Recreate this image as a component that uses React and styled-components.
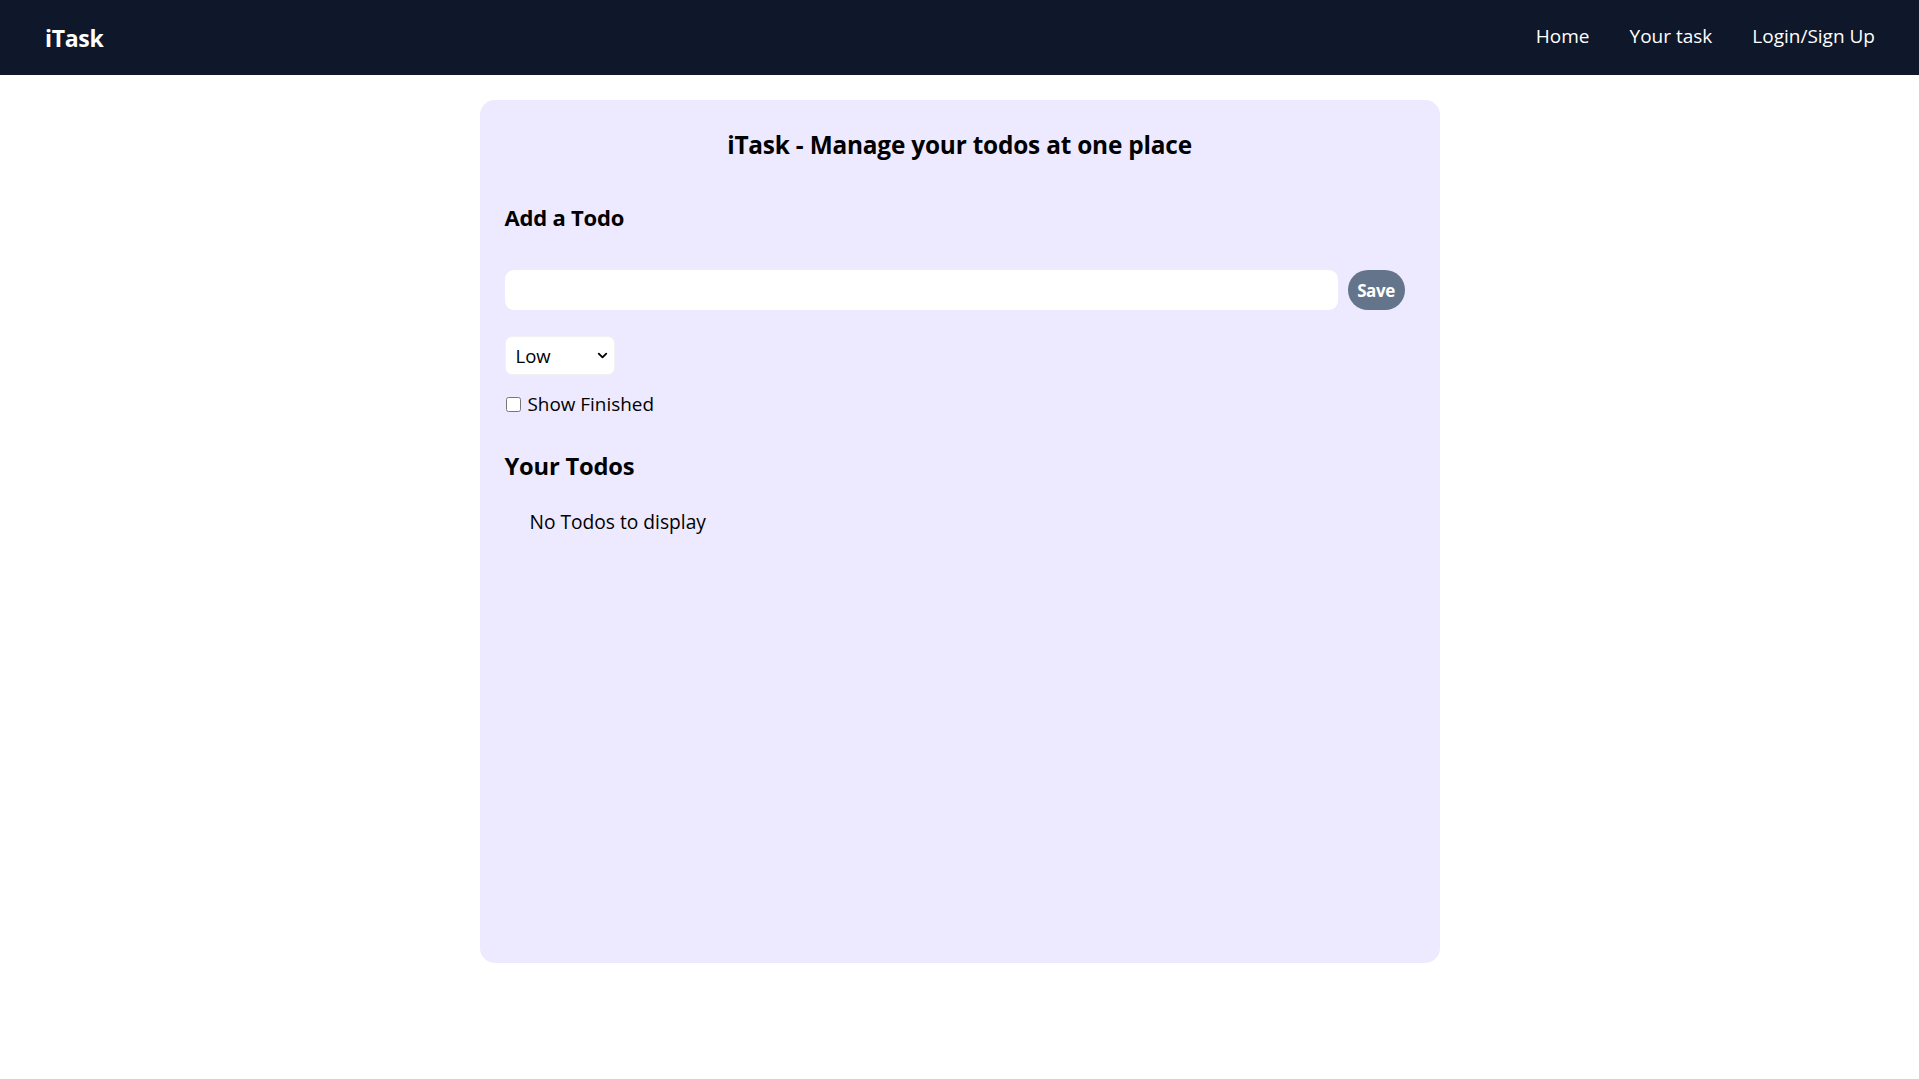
import React, { useState } from 'react';
import styled, { createGlobalStyle } from 'styled-components';
import { ChevronDown } from 'lucide-react';

const GlobalStyle = createGlobalStyle`
  * { box-sizing: border-box; }
  body {
    margin: 0;
    font-family: "Open Sans", "Noto Sans", sans-serif;
    color: #000;
    background: #fff;
  }
`;

const App = () => {
  const [todo, setTodo] = useState('');
  const [priority, setPriority] = useState('Low');
  const [showFinished, setShowFinished] = useState(false);

  return (
    <>
      <GlobalStyle />
      <Nav>
        <Logo>iTask</Logo>
        <NavLinks>
          <NavLink>Home</NavLink>
          <NavLink>Your task</NavLink>
          <NavLink>Login/Sign Up</NavLink>
        </NavLinks>
      </Nav>
      <Card>
        <Title>iTask - Manage your todos at one place</Title>
        <SubHeading>Add a Todo</SubHeading>
        <InputRow>
          <TodoInput value={todo} onChange={(e) => setTodo(e.target.value)} />
          <SaveButton disabled={todo.length < 1}>Save</SaveButton>
        </InputRow>
        <SelectWrap>
          <Select value={priority} onChange={(e) => setPriority(e.target.value)}>
            <option>Low</option>
            <option>Medium</option>
            <option>High</option>
          </Select>
          <Chevron>
            <ChevronDown size={15} strokeWidth={3} />
          </Chevron>
        </SelectWrap>
        <CheckRow>
          <Check
            type="checkbox"
            checked={showFinished}
            onChange={() => setShowFinished(!showFinished)}
          />
          Show Finished
        </CheckRow>
        <TodosHeading>Your Todos</TodosHeading>
        <Empty>No Todos to display</Empty>
      </Card>
    </>
  );
};

export default App;

const Nav = styled.nav`
  height: 75px;
  background: #0f172a;
  color: #fff;
  display: flex;
  align-items: center;
  justify-content: space-between;
  padding: 0 44px 3px 45px;
`;

const Logo = styled.span`
  font-size: 23px;
  font-weight: 700;
  letter-spacing: -0.3px;
  margin-top: 3px;
`;

const NavLinks = styled.ul`
  display: flex;
  gap: 40px;
  list-style: none;
  margin: 0;
  padding: 0;
`;

const NavLink = styled.li`
  font-size: 19px;
  cursor: pointer;
  &:hover {
    font-weight: 700;
  }
`;

const Card = styled.main`
  width: 960px;
  min-height: 863px;
  margin: 25px auto;
  padding: 25px;
  background: #ede9fe;
  border-radius: 15px;
  display: flex;
  flex-direction: column;
`;

const Title = styled.h1`
  margin: 0;
  text-align: center;
  font-size: 24.4px;
  line-height: 40px;
  font-weight: 700;
  letter-spacing: -0.2px;
`;

const SubHeading = styled.h2`
  margin: 35px 0 0;
  font-size: 22px;
  line-height: 35px;
  font-weight: 700;
  letter-spacing: -0.2px;
`;

const InputRow = styled.div`
  display: flex;
  margin-top: 35px;
`;

const TodoInput = styled.input`
  flex: 1;
  height: 40px;
  border: none;
  border-radius: 9px;
  background: #fff;
  padding: 0 12px;
  font: inherit;
  font-size: 20px;
  outline: none;
`;

const SaveButton = styled.button`
  margin: 0 10px;
  height: 40px;
  width: 57px;
  border: none;
  border-radius: 999px;
  background: #64748b;
  color: #fff;
  font-family: inherit;
  font-size: 17px;
  font-weight: 700;
  letter-spacing: -0.4px;
  padding: 0;
  cursor: pointer;
  &:disabled {
    cursor: default;
  }
`;

const SelectWrap = styled.div`
  position: relative;
  width: 110px;
  margin-top: 26px;
`;

const Select = styled.select`
  appearance: none;
  width: 110px;
  height: 39px;
  border: 1px solid #f1f1f4;
  border-radius: 7px;
  background: #fff;
  padding: 0 10px;
  font-family: inherit;
  font-size: 18.5px;
  color: #000;
  outline: none;
`;

const Chevron = styled.span`
  position: absolute;
  right: 5px;
  top: 12px;
  display: flex;
  pointer-events: none;
  color: #000;
`;

const CheckRow = styled.label`
  display: flex;
  align-items: center;
  gap: 7px;
  margin-top: 19px;
  font-size: 18.9px;
  line-height: 20px;
`;

const Check = styled.input`
  width: 15px;
  height: 15px;
  margin: 0 0 0 1px;
`;

const TodosHeading = styled.h2`
  margin: 35px 0 0;
  font-size: 23.7px;
  line-height: 35px;
  font-weight: 700;
  letter-spacing: -0.2px;
`;

const Empty = styled.div`
  margin: 23px 25px;
  font-size: 19.2px;
  line-height: 30px;
`;
